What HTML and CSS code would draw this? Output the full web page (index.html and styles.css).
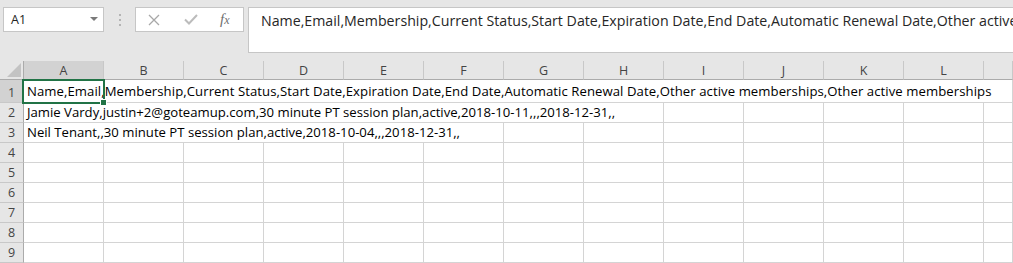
FILE: index.html
```html
<!DOCTYPE html>
<html lang="en">
<head>
  <meta charset="UTF-8">
  <title>members.csv - Excel</title>
  <link rel="stylesheet" href="styles.css">
</head>
<body>
  <div class="toolbar">
    <div class="namebox">
      <span class="namebox-value">A1</span>
      <span class="namebox-arrow"></span>
    </div>
    <div class="grip"><i></i><i></i><i></i></div>
    <div class="fx-buttons">
      <svg class="btn-cancel" width="12" height="12" viewBox="0 0 12 12">
        <path d="M1 1 L11 11 M11 1 L1 11" stroke="#a8a8a8" stroke-width="1.3" fill="none"/>
      </svg>
      <svg class="btn-enter" width="14" height="11" viewBox="0 0 14 11">
        <path d="M1 5.5 L5 9.5 L13 1" stroke="#bcbcbc" stroke-width="2" fill="none"/>
      </svg>
      <span class="fx">f<small>x</small></span>
    </div>
    <div class="formula">Name,Email,Membership,Current Status,Start Date,Expiration Date,End Date,Automatic Renewal Date,Other active memberships,Other active memberships</div>
  </div>

  <div class="sheet">
    <div class="corner">
      <svg width="14" height="14" viewBox="0 0 14 14"><polygon points="14,0 14,14 0,14" fill="#c3c3c3"/></svg>
    </div>
    <div class="col-head selected">A</div>
    <div class="col-head">B</div>
    <div class="col-head">C</div>
    <div class="col-head">D</div>
    <div class="col-head">E</div>
    <div class="col-head">F</div>
    <div class="col-head">G</div>
    <div class="col-head">H</div>
    <div class="col-head">I</div>
    <div class="col-head">J</div>
    <div class="col-head">K</div>
    <div class="col-head">L</div>
    <div class="col-head"></div>

    <!-- row 1 -->
    <div class="row-head selected first">1</div>
    <div class="cell text first span-13">Name,Email,Membership,Current Status,Start Date,Expiration Date,End Date,Automatic Renewal Date,Other active memberships,Other active memberships</div>

    <!-- row 2 -->
    <div class="row-head">2</div>
    <div class="cell text span-8">Jamie Vardy,justin+2@goteamup.com,30 minute PT session plan,active,2018-10-11,,,2018-12-31,,</div>
    <div class="cell"></div><div class="cell"></div><div class="cell"></div><div class="cell"></div><div class="cell"></div>

    <!-- row 3 -->
    <div class="row-head">3</div>
    <div class="cell text span-6">Neil Tenant,,30 minute PT session plan,active,2018-10-04,,,2018-12-31,,</div>
    <div class="cell"></div><div class="cell"></div><div class="cell"></div><div class="cell"></div><div class="cell"></div><div class="cell"></div><div class="cell"></div>

    <div class="row-head">4</div>
    <div class="cell"></div><div class="cell"></div><div class="cell"></div><div class="cell"></div><div class="cell"></div><div class="cell"></div><div class="cell"></div><div class="cell"></div><div class="cell"></div><div class="cell"></div><div class="cell"></div><div class="cell"></div><div class="cell"></div>
    <div class="row-head">5</div>
    <div class="cell"></div><div class="cell"></div><div class="cell"></div><div class="cell"></div><div class="cell"></div><div class="cell"></div><div class="cell"></div><div class="cell"></div><div class="cell"></div><div class="cell"></div><div class="cell"></div><div class="cell"></div><div class="cell"></div>
    <div class="row-head">6</div>
    <div class="cell"></div><div class="cell"></div><div class="cell"></div><div class="cell"></div><div class="cell"></div><div class="cell"></div><div class="cell"></div><div class="cell"></div><div class="cell"></div><div class="cell"></div><div class="cell"></div><div class="cell"></div><div class="cell"></div>
    <div class="row-head">7</div>
    <div class="cell"></div><div class="cell"></div><div class="cell"></div><div class="cell"></div><div class="cell"></div><div class="cell"></div><div class="cell"></div><div class="cell"></div><div class="cell"></div><div class="cell"></div><div class="cell"></div><div class="cell"></div><div class="cell"></div>
    <div class="row-head">8</div>
    <div class="cell"></div><div class="cell"></div><div class="cell"></div><div class="cell"></div><div class="cell"></div><div class="cell"></div><div class="cell"></div><div class="cell"></div><div class="cell"></div><div class="cell"></div><div class="cell"></div><div class="cell"></div><div class="cell"></div>
    <div class="row-head">9</div>
    <div class="cell"></div><div class="cell"></div><div class="cell"></div><div class="cell"></div><div class="cell"></div><div class="cell"></div><div class="cell"></div><div class="cell"></div><div class="cell"></div><div class="cell"></div><div class="cell"></div><div class="cell"></div><div class="cell"></div>

    <div class="selection"><span class="handle"></span></div>
  </div>
</body>
</html>
```

FILE: styles.css
```css
body {
  margin: 0;
  width: 1013px;
  height: 263px;
  overflow: hidden;
  background: #e6e6e6;
  font-family: "Open Sans", "Noto Sans", sans-serif;
  color: #000;
}
.toolbar {
  display: flex;
  align-items: flex-start;
  height: 61px;
  padding: 7px 0 0 3px;
  box-sizing: border-box;
}
.namebox {
  display: flex;
  align-items: center;
  justify-content: space-between;
  width: 101px;
  height: 25px;
  box-sizing: border-box;
  padding: 0 5px 0 7px;
  background: #fff;
  border: 1px solid #c6c6c6;
}
.namebox-value {
  font-size: 12.5px;
  color: #222;
}
.namebox-arrow {
  width: 0;
  height: 0;
  border-left: 4px solid transparent;
  border-right: 4px solid transparent;
  border-top: 4px solid #7a7a7a;
  margin-top: -1px;
}
.grip {
  display: flex;
  flex-direction: column;
  gap: 3px;
  width: 31px;
  align-items: center;
  padding-top: 7px;
}
.grip i {
  display: block;
  width: 2px;
  height: 2px;
  background: #b4b4b4;
}
.fx-buttons {
  display: flex;
  align-items: center;
  width: 109px;
  height: 25px;
  box-sizing: border-box;
  background: #fff;
  border: 1px solid #c6c6c6;
  padding-left: 12px;
}
.btn-cancel {
  margin-right: 24px;
}
.btn-enter {
  margin-right: 22px;
}
.fx {
  font-family: "Liberation Serif", serif;
  font-style: italic;
  font-size: 15px;
  color: #6f6f6f;
  line-height: 1;
}
.fx small {
  font-size: 12px;
}
.formula {
  flex: 1;
  margin-left: 4px;
  height: 46px;
  box-sizing: border-box;
  background: #fff;
  border: 1px solid #c6c6c6;
  border-right: none;
  padding: 3px 0 0 12px;
  font-size: 14.2px;
  line-height: 20px;
  color: #262626;
  white-space: nowrap;
  overflow: hidden;
}

.sheet {
  position: relative;
  display: grid;
  grid-template-columns: 24px repeat(12, 80px) 29px;
  grid-template-rows: 19px 23px repeat(8, 20px);
  background: #fff;
}
.corner {
  display: flex;
  align-items: flex-end;
  justify-content: flex-end;
  padding: 0 2px 2px 0;
  background: #e6e6e6;
  border-right: 1px solid #ababab;
  border-bottom: 1px solid #ababab;
  box-sizing: border-box;
}
.col-head {
  display: flex;
  align-items: center;
  justify-content: center;
  font-size: 12.5px;
  color: #444;
  background: #e6e6e6;
  border-right: 1px solid #c8c8c8;
  border-bottom: 1px solid #ababab;
  box-sizing: border-box;
}
.row-head {
  display: flex;
  align-items: center;
  justify-content: center;
  font-size: 12.5px;
  color: #444;
  background: #e6e6e6;
  border-right: 1px solid #ababab;
  border-bottom: 1px solid #c8c8c8;
  box-sizing: border-box;
}
.row-head.first {
  padding-top: 2px;
}
.selected {
  background: #d2d2d2;
}
.cell {
  border-right: 1px solid #d4d4d4;
  border-bottom: 1px solid #d4d4d4;
  box-sizing: border-box;
}
.cell.text {
  font-size: 13.15px;
  line-height: 19px;
  padding-left: 3px;
  white-space: nowrap;
  overflow: hidden;
}
.cell.text.first {
  padding-top: 2px;
  letter-spacing: 0.07px;
}
.span-13 { grid-column: span 13; }
.span-8 { grid-column: span 8; }
.span-6 { grid-column: span 6; }

.selection {
  position: absolute;
  left: 22px;
  top: 18px;
  width: 83px;
  height: 25px;
  box-sizing: border-box;
  border: 2px solid #217346;
}
.handle {
  position: absolute;
  right: -4px;
  bottom: -4px;
  width: 5px;
  height: 5px;
  background: #217346;
  border: 1px solid #fff;
}
```
